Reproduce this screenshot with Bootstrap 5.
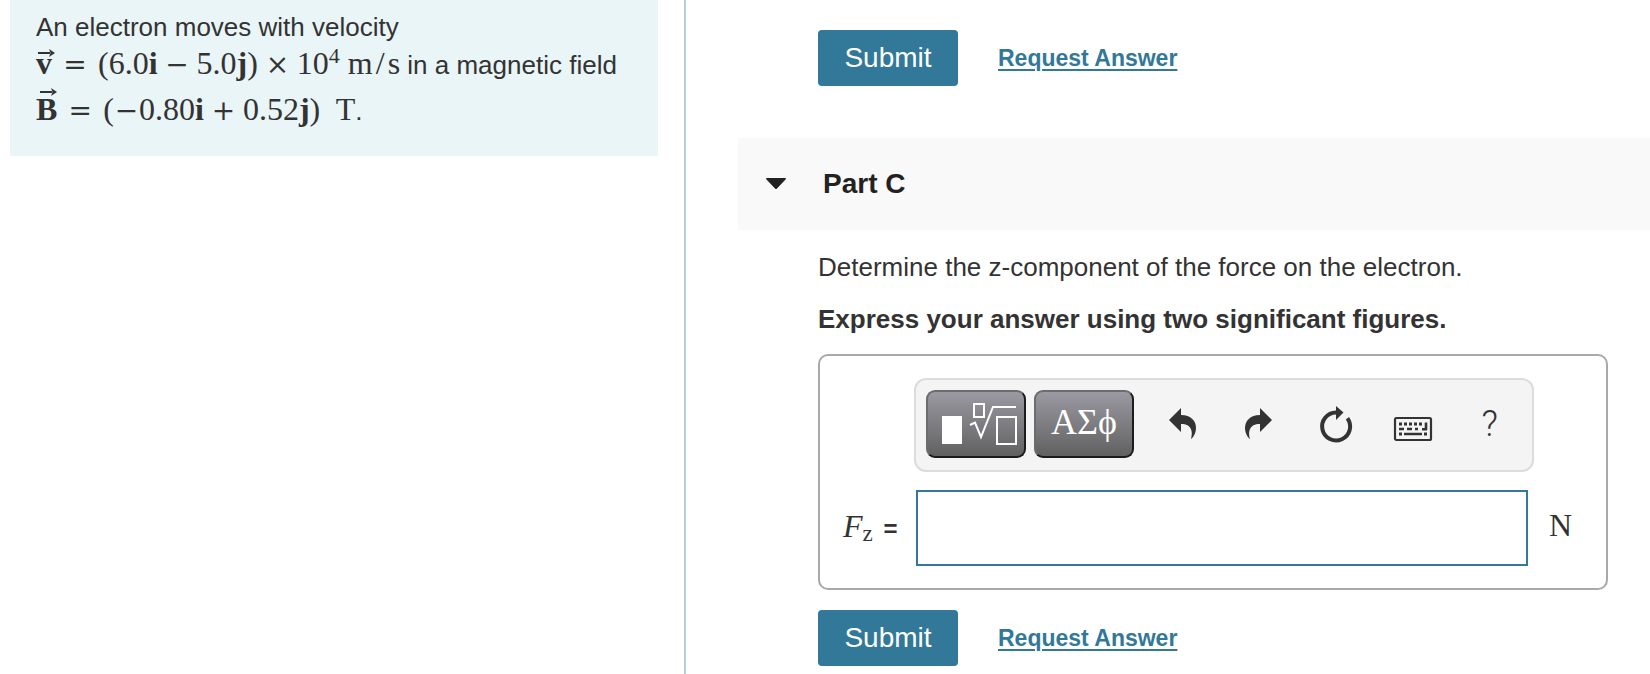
<!DOCTYPE html>
<html lang="en">
<head>
<meta charset="utf-8">
<meta name="viewport" content="width=device-width, initial-scale=1">
<title>Magnetic force on an electron</title>
<link href="https://cdn.jsdelivr.net/npm/bootstrap@5.3.0/dist/css/bootstrap.min.css" rel="stylesheet">
<style>
  body { font-family: "Liberation Sans", Arial, sans-serif; font-size: 26px; line-height: 36px; color: #333; background: #fff; }
  .split { display: grid; grid-template-columns: 343fr 482fr; min-height: 100vh; }
  .pane-left { border-right: 2px solid #bccbe0; padding: 0 26px 0 10px; }
  .intro { background: #eaf5f7; padding: 9px 0 21px 26px; white-space: nowrap; }
  .intro-line { height: 36px; }
  .intro-line.mid { height: 42px; line-height: 40px; }
  .intro-line.tall { height: 48px; line-height: 48px; }
  .eq { font-family: "Liberation Serif", "Times New Roman", serif; font-size: 32px; line-height: 1; }
  .op, .neg { display: inline-block; width: 39px; text-align: center; font-family: "DejaVu Serif", serif; font-size: 28px; line-height: 1; }
  .op.rel { width: 46px; }
  .neg { width: 25px; }
  .slash { padding: 0 3px; }
  .eq sup { font-size: 22px; line-height: 0; top: -11px; }
  .vec { display: inline-block; position: relative; }
  .vec svg { position: absolute; left: 2px; top: 1px; }
  .vec.upper svg { left: 4px; top: -6px; }
  .pane-right { padding: 30px 0 8px 52px; }
  .indent { padding-left: 80px; }
  .actions { display: flex; align-items: center; gap: 40px; }
  .btn-submit { width: 140px; height: 56px; padding: 0; border: 0; border-radius: 4px; background: #317899; color: #fff; font-size: 28px; line-height: 56px; }
  .btn-submit:hover { background: #28637f; color: #fff; }
  .link-answer { color: #317899; font-size: 23px; font-weight: 700; text-decoration-thickness: 2px; text-underline-offset: 3px; }
  .part-head { display: flex; align-items: center; width: 100%; height: 92px; margin: 52px 0 19px; padding: 0 0 0 27px; border: 0; background: #f9f9f9; color: #222; font-size: 28px; font-weight: 700; text-align: left; gap: 36px; }
  .question p { margin: 0 0 16px; }
  .question p + p { margin-bottom: 17px; }
  .answer-box { display: grid; grid-template-columns: 94px 1fr 72px; row-gap: 18px; align-items: center; margin: 0 42px 20px 0; padding: 22px 0; border: 2px solid #a9a9a9; border-radius: 10px; }
  .tools { grid-column: 2; display: flex; align-items: center; gap: 8px; height: 94px; padding: 0 4px 2px 10px; border: 2px solid #dcdcdc; border-radius: 12px; background: #f4f4f4; }
  .key { width: 100px; height: 68px; padding: 0; border: 2px solid; border-color: #6c6c6c #1c1c1c #1c1c1c #6c6c6c; border-radius: 9px; background: linear-gradient(#9b99a2, #616161); color: #fff; font-family: "Liberation Serif", serif; font-size: 36px; line-height: 36px; flex: none; }
  .key-text { display: block; padding-bottom: 4px; }
  .key svg, .tool svg { display: block; margin: auto; }
  .tool-set { flex: 1; display: flex; margin-left: 2px; }
  .tool { flex: 1; height: 68px; padding: 0; border: 0; background: none; color: #333; font-family: Roboto, sans-serif; font-size: 36px; font-weight: 300; line-height: 68px; }
  .answer-label { grid-column: 1; padding-left: 23px; white-space: nowrap; font-size: 24px; }
  .answer-label sub { font-family: "Liberation Serif", serif; font-size: 23px; bottom: -4px; line-height: 0; margin-right: 4px; }
  .answer-input { height: 76px; width: auto; margin: 0 6px 0 2px; border: 2px solid #317899; border-radius: 0; font-size: 26px; }
  .unit { padding: 0 0 6px 15px; }
</style>
</head>
<body>
<main class="split">
  <section class="pane-left">
    <div class="intro">
      <div class="intro-line">An electron moves with velocity</div>
      <div class="intro-line mid"><span class="eq"><b class="vec">v<svg width="18" height="10" viewBox="0 0 18 10" aria-hidden="true"><path d="M0 5H12" fill="none" stroke="#333" stroke-width="2"/><path d="M11 1L17 5L11 9L12.500 5Z" fill="#333"/></svg></b><span class="op rel">=</span>(6.0<b>i</b><span class="op">−</span>5.0<b>j</b>)<span class="op">×</span>10<sup>4</sup> m<span class="slash">/</span>s</span> in a magnetic field</div>
      <div class="intro-line tall"><span class="eq"><b class="vec upper">B<svg width="18" height="10" viewBox="0 0 18 10" aria-hidden="true"><path d="M0 5H12" fill="none" stroke="#333" stroke-width="2"/><path d="M11 1L17 5L11 9L12.500 5Z" fill="#333"/></svg></b><span class="op rel">=</span>(<span class="neg">−</span>0.80<b>i</b><span class="op">+</span>0.52<b>j</b>)&nbsp; T</span>.</div>
    </div>
  </section>

  <section class="pane-right">
    <div class="actions indent">
      <button type="button" class="btn btn-submit">Submit</button>
      <a href="#" class="link-answer">Request Answer</a>
    </div>

    <button type="button" class="part-head" aria-expanded="true">
      <svg width="22" height="14" viewBox="0 0 22 14" aria-hidden="true"><path d="M2 1H20Q22 1 20.500 2.500L12 11.500Q11 12.500 10 11.500L1.500 2.500Q0 1 2 1Z" fill="#222"/></svg>
      <span>Part C</span>
    </button>

    <div class="indent question">
      <p>Determine the z-component of the force on the electron.</p>
      <p><b>Express your answer using two significant figures.</b></p>

      <div class="answer-box">
        <div class="tools" role="toolbar" aria-label="Equation tools">
          <button type="button" class="key" aria-label="Templates">
            <svg width="96" height="64" viewBox="2 2 96 64" fill="none" stroke="#fff" stroke-width="2"><path d="M16 26H36V54H16Z" fill="#fff" stroke="none"/><path d="M48 14H58V27H48ZM71 27H90V54H71ZM44 35L49 32.500L55 47L67 17H90"/></svg>
          </button>
          <button type="button" class="key" aria-label="Symbols"><span class="key-text">ΑΣϕ</span></button>
          <div class="tool-set">
            <button type="button" class="tool" aria-label="Undo"><svg width="40" height="68" viewBox="0 0 40 68" fill="currentColor"><path d="M7 30L19 18V25C29 25 34 31 34 38C34 43 31 48 29 49C31 42 30 34 19 34V42Z"/></svg></button>
            <button type="button" class="tool" aria-label="Redo"><svg width="40" height="68" viewBox="0 0 40 68" fill="currentColor"><path d="M33 30L21 18V25C11 25 6 31 6 38C6 43 9 48 11 49C9 42 10 34 21 34V42Z"/></svg></button>
            <button type="button" class="tool" aria-label="Reset"><svg width="40" height="68" viewBox="0 0 40 68"><path d="M31.400 28.200A14 14 0 1 1 20 22.500" fill="none" stroke="currentColor" stroke-width="4"/><path d="M20 16L27.500 22.500L20 30Z" fill="currentColor"/></svg></button>
            <button type="button" class="tool" aria-label="Keyboard"><svg width="40" height="68" viewBox="0 0 40 68" fill="none" stroke="currentColor"><rect x="2" y="28" width="36" height="22" rx="1.500" stroke-width="2.200"/><path d="M6 34H29M6 44H9M31 44H34" stroke-width="3" stroke-dasharray="3 2"/><path d="M6 39H11M14 39H27" stroke-width="2.500" stroke-dasharray="5 3 3 2 3 2 3 9"/><path d="M29 39.200H34M11 44H29" stroke-width="2.400"/><path d="M33 32.500V40" stroke-width="2.600"/></svg></button>
            <button type="button" class="tool" aria-label="Help">?</button>
          </div>
        </div>
        <label class="answer-label" for="fz"><i class="eq">F</i><sub>z</sub> <b>=</b></label>
        <input id="fz" type="text" class="form-control answer-input" autocomplete="off">
        <span class="eq unit">N</span>
      </div>

      <div class="actions">
        <button type="button" class="btn btn-submit">Submit</button>
        <a href="#" class="link-answer">Request Answer</a>
      </div>
    </div>
  </section>
</main>
<script src="https://cdn.jsdelivr.net/npm/bootstrap@5.3.0/dist/js/bootstrap.bundle.min.js"></script>
</body>
</html>
